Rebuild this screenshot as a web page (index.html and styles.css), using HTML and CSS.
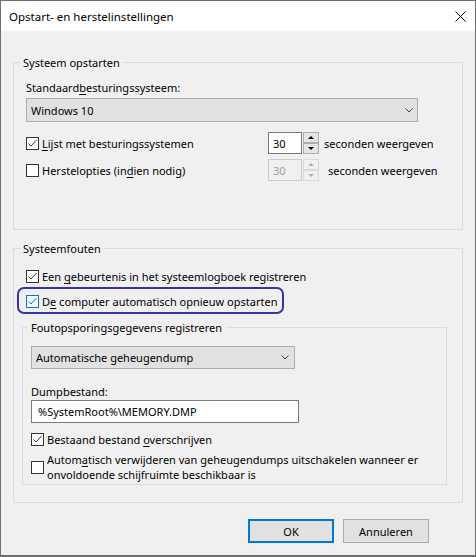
FILE: index.html
```html
<!DOCTYPE html>
<html lang="nl">
<head>
    <meta charset="UTF-8">
    <meta name="viewport" content="width=device-width, initial-scale=1.0">
    <title>Opstart- en herstelinstellingen</title>
    <link rel="stylesheet" href="styles.css">
</head>
<body>
    <!-- Dialog window -->
    <div class="dialog">
        <div class="titlebar">
            <span class="title">Opstart- en herstelinstellingen</span>
            <svg class="close" width="11" height="11" viewBox="0 0 11 11">
                <path d="M0.5 0.5 L10.5 10.5 M10.5 0.5 L0.5 10.5" stroke="#000" stroke-width="1" fill="none"/>
            </svg>
        </div>

        <div class="content">
            <!-- Systeem opstarten -->
            <fieldset class="group">
                <legend>Systeem opstarten</legend>
                <div class="field-label">Standaard<u>b</u>esturingssysteem:</div>
                <div class="combo combo-os">
                    <span>Windows 10</span>
                    <svg class="chevron" width="8" height="5" viewBox="0 0 8 5"><path d="M0.5 0.5 L4 4 L7.5 0.5" stroke="#444" fill="none"/></svg>
                </div>

                <div class="option-row first">
                    <label class="check">
                        <span class="box"><svg width="11" height="11" viewBox="0 0 11 11"><path d="M1.5 5.5 L4 8 L9.5 2" stroke="#333" fill="none"/></svg></span>
                        <span><u>L</u>ijst met besturingssystemen</span>
                    </label>
                    <div class="spin">
                        <span class="spin-value">30</span>
                        <span class="spin-buttons">
                            <span class="spin-btn"><i class="arrow-up"></i></span>
                            <span class="spin-btn"><i class="arrow-down"></i></span>
                        </span>
                    </div>
                    <span class="spin-label">seconden weergeven</span>
                </div>

                <div class="option-row">
                    <label class="check">
                        <span class="box"></span>
                        <span>Herstelopties (in<u>d</u>ien nodig)</span>
                    </label>
                    <div class="spin disabled">
                        <span class="spin-value">30</span>
                        <span class="spin-buttons">
                            <span class="spin-btn"><i class="arrow-up"></i></span>
                            <span class="spin-btn"><i class="arrow-down"></i></span>
                        </span>
                    </div>
                    <span class="spin-label shifted">seconden weergeven</span>
                </div>
            </fieldset>

            <!-- Systeemfouten -->
            <fieldset class="group group-errors">
                <legend>Systeemfouten</legend>
                <label class="check">
                    <span class="box"><svg width="11" height="11" viewBox="0 0 11 11"><path d="M1.5 5.5 L4 8 L9.5 2" stroke="#333" fill="none"/></svg></span>
                    <span>Een <u>g</u>ebeurtenis in het systeemlogboek registreren</span>
                </label>
                <label class="check highlight">
                    <span class="box hover"><svg width="11" height="11" viewBox="0 0 11 11"><path d="M1.5 5.5 L4 8 L9.5 2" stroke="#0078d7" fill="none"/></svg></span>
                    <span>D<u>e</u> computer automatisch opnieuw opstarten</span>
                </label>

                <fieldset class="subgroup">
                    <legend>Foutopsporingsgegevens registreren</legend>
                    <div class="combo combo-dump">
                        <span>Automatische geheugendump</span>
                        <svg class="chevron" width="8" height="5" viewBox="0 0 8 5"><path d="M0.5 0.5 L4 4 L7.5 0.5" stroke="#444" fill="none"/></svg>
                    </div>
                    <div class="field-label dump-label">Dumpbestand:</div>
                    <div class="textbox">%SystemRoot%\MEMORY.DMP</div>
                    <label class="check overwrite">
                        <span class="box"><svg width="11" height="11" viewBox="0 0 11 11"><path d="M1.5 5.5 L4 8 L9.5 2" stroke="#333" fill="none"/></svg></span>
                        <span>Bestaand bestand <u>o</u>verschrijven</span>
                    </label>
                    <label class="check multiline">
                        <span class="box"></span>
                        <span>Autom<u>a</u>tisch verwijderen van geheugendumps uitschakelen wanneer er<br>onvoldoende schijfruimte beschikbaar is</span>
                    </label>
                </fieldset>
            </fieldset>

            <div class="actions">
                <button class="btn btn-default">OK</button>
                <button class="btn">Annuleren</button>
            </div>
        </div>
    </div>
</body>
</html>
```

FILE: styles.css
```css
body {
    margin: 0;
    font-family: "Noto Sans", "Segoe UI", sans-serif;
    font-size: 11px;
    line-height: 15px;
    color: #000;
    background: #f0f0f0;
}

u {
    text-decoration-thickness: 1px;
    text-underline-offset: 2px;
}

.dialog {
    width: 476px;
    height: 557px;
    box-sizing: border-box;
    border: 1px solid #6e6e6e;
    border-bottom-width: 2px;
    background: #f0f0f0;
    display: flex;
    flex-direction: column;
}

.titlebar {
    height: 30px;
    background: #fff;
    display: flex;
    align-items: center;
    justify-content: space-between;
    padding: 0 9px 0 8px;
}

.title {
    font-size: 11.5px;
}

.content {
    padding: 24px 12px 0;
    display: flex;
    flex-direction: column;
}

.group {
    margin: 0;
    padding: 10px 12px 48px;
    border: 1px solid #dcdcdc;
    min-width: 0;
}

.group legend {
    padding: 0 2px;
    margin-left: -5px;
}

.group-errors {
    margin-top: 11px;
    padding-top: 13px;
    padding-bottom: 17px;
}

.subgroup {
    margin: 10px 3px 0 -4px;
    padding: 11px 8px 2px;
    border: 1px solid #dcdcdc;
    min-width: 0;
}

.subgroup legend {
    padding: 0 4px;
    margin-left: -4px;
}

.combo {
    box-sizing: border-box;
    height: 24px;
    border: 1px solid #adadad;
    background: #e1e1e1;
    display: flex;
    align-items: center;
    justify-content: space-between;
    padding: 0 4px 0 4px;
}

.combo-os {
    width: 392px;
    margin-top: 2px;
}

.combo-dump {
    width: 264px;
    height: 23px;
    padding-right: 5px;
}

.dump-label {
    margin-top: 15px;
}

.textbox {
    box-sizing: border-box;
    width: 268px;
    height: 23px;
    border: 1px solid #7a7a7a;
    background: #fff;
    padding: 0 6px;
    display: flex;
    align-items: center;
}

/* checkboxes */
.check {
    display: flex;
    align-items: center;
    gap: 3px;
}

.box {
    box-sizing: border-box;
    width: 13px;
    height: 13px;
    border: 1px solid #333;
    background: #fff;
    display: flex;
    flex-shrink: 0;
}

.box.hover {
    border-color: #0078d7;
}

.group-errors > .check + .check {
    margin-top: 10px;
}

.highlight {
    position: relative;
    display: inline-flex;
}

.highlight::after {
    content: "";
    position: absolute;
    left: -9px;
    right: -7px;
    top: -7px;
    bottom: -5px;
    border: 2px solid #3535a8;
    border-radius: 7px;
}

.overwrite {
    margin-top: 9px;
}

.multiline {
    margin-top: 5px;
}

/* spinner rows */
.option-row {
    display: flex;
    align-items: center;
    height: 22px;
    margin-top: 5px;
}

.option-row.first {
    margin-top: 10px;
}

.option-row .check {
    width: 242px;
}

.spin {
    display: flex;
    height: 22px;
    gap: 1px;
}

.spin-value {
    box-sizing: border-box;
    width: 34px;
    height: 22px;
    border: 1px solid #7a7a7a;
    background: #fff;
    padding-left: 4px;
    display: flex;
    align-items: center;
}

.spin-buttons {
    display: flex;
    flex-direction: column;
    width: 16px;
}

.spin-btn {
    box-sizing: border-box;
    height: 11px;
    border: 1px solid #adadad;
    background: #e5e5e5;
    display: flex;
    align-items: center;
    justify-content: center;
}

.arrow-up {
    border-left: 3px solid transparent;
    border-right: 3px solid transparent;
    border-bottom: 3px solid #000;
}

.arrow-down {
    border-left: 3px solid transparent;
    border-right: 3px solid transparent;
    border-top: 3px solid #000;
}

.spin.disabled .spin-value {
    border-color: #cccccc;
    background: #f0f0f0;
    color: #a0a0a0;
}

.spin.disabled .spin-btn {
    border-color: #d9d9d9;
    background: #f0f0f0;
}

.spin.disabled .arrow-up {
    border-bottom-color: #b0b0b0;
}

.spin.disabled .arrow-down {
    border-top-color: #b0b0b0;
}

.spin-label {
    margin-left: 5px;
}

.spin-label.shifted {
    margin-left: 9px;
}

.field-label {
    line-height: 16px;
}

/* dialog buttons */
.actions {
    display: flex;
    justify-content: flex-end;
    gap: 9px;
    margin-top: 16px;
    padding-right: 34px;
}

.btn {
    box-sizing: border-box;
    width: 86px;
    height: 24px;
    font-family: inherit;
    font-size: 11px;
    border: 1px solid #adadad;
    background: #e1e1e1;
    color: #000;
    padding: 0;
}

.btn-default {
    border: 2px solid #0078d7;
}
```
